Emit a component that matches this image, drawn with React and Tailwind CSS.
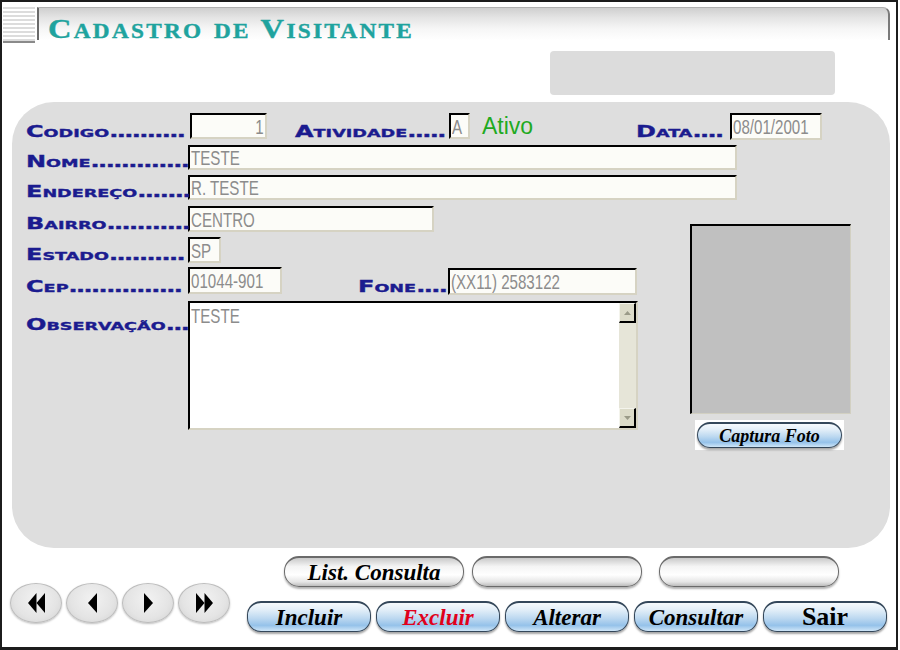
import React from "react";

const LBL =
  "font-['DejaVu_Sans',sans-serif] font-bold text-[15px] leading-none text-[#1b1b8f] [font-variant-caps:small-caps] [-webkit-text-stroke:0.35px_#1b1b8f] whitespace-nowrap inline-block origin-left scale-x-[1.6]";

function Label({ word, dots, w, className = "" }) {
  return (
    <div className={`shrink-0 flex items-end leading-none ${className}`} style={{ width: w }}>
      <span className={LBL}>
        <span>{word}</span>
        <span className="tracking-[-1px]">{dots}</span>
      </span>
    </div>
  );
}

function Field({ value, w, h = 25, right = false, className = "" }) {
  return (
    <div
      className={`shrink-0 bg-[#fcfcf8] border-2 border-t-black border-l-black border-b-[#d6d3c3] border-r-[#d6d3c3] ${className}`}
      style={{ width: w, height: h }}
    >
      <div className={`flex h-full items-center px-[1px] ${right ? "justify-end" : ""}`}>
        <span
          className={`inline-block whitespace-nowrap font-['Liberation_Sans',sans-serif] text-[21px] leading-none text-[#8c8c8c] scale-x-[0.72] ${right ? "origin-right" : "origin-left"}`}
        >
          {value}
        </span>
      </div>
    </div>
  );
}

const BLUE_BG =
  "bg-[linear-gradient(to_bottom,#f6fafd_0%,#e2eef8_25%,#bcd8f0_55%,#95c2ea_80%,#cfe6f8_100%)]";

function BluePill({ children }) {
  return (
    <div
      className={`h-[31px] w-[124px] rounded-[14px] border border-[#34475a] border-t-2 shadow-[0_2px_2px_rgba(0,0,0,0.35)] ${BLUE_BG} flex items-center justify-center`}
    >
      {children}
    </div>
  );
}

function GrayPill({ children, w }) {
  return (
    <div
      className="h-[31px] shrink-0 rounded-[15px] border border-[#6a6a6a] border-t-2 shadow-[0_2px_2px_rgba(0,0,0,0.3)] bg-[linear-gradient(to_bottom,#c9c9c9_0%,#f4f4f4_30%,#ffffff_60%,#e6e6e6_85%,#bdbdbd_100%)] flex items-center justify-center"
      style={{ width: w }}
    >
      {children}
    </div>
  );
}

function NavBtn({ children }) {
  return (
    <div className="w-[52px] h-[40px] rounded-[50%] border border-[#bdbdbd] shadow-[0_1px_2px_rgba(0,0,0,0.25)] bg-[radial-gradient(ellipse_at_50%_40%,#f2f2f2_0%,#e4e4e4_60%,#cfcfcf_100%)] flex items-center justify-center">
      {children}
    </div>
  );
}

const BTN_TXT =
  "font-['Liberation_Serif',serif] font-bold italic text-[23px] leading-none";

export default function App() {
  return (
    <div className="w-[900px] h-[650px] bg-white">
      <div className="w-[898px] h-[650px] bg-white border-t-2 border-l-2 border-r-2 border-b-[3px] border-[#1c1c1c] flex flex-col">
        {/* Title row */}
        <div className="flex mt-[5px] h-[36px]">
          <div className="ml-[1px] w-[32px] h-[36px] border-b-2 border-[#8a8a8a] bg-[repeating-linear-gradient(to_bottom,#dcdcdc_0px,#dcdcdc_2px,#ffffff_2px,#ffffff_4px)]" />
          <div className="ml-[2px] mr-[6px] flex-1 h-[33px] border-l-2 border-l-[#6a6a6a] border-t border-t-[#b0b0b0] border-r-2 border-r-[#7a7a7a] rounded-tr-[7px] bg-[linear-gradient(to_bottom,#cfcfcf_0%,#e4e4e4_30%,#f6f6f6_65%,#ffffff_100%)] flex items-end pl-[9px]">
            <span className="inline-block origin-left scale-x-[1.16] font-['Liberation_Serif',serif] font-bold text-[28px] leading-[23px] tracking-[2px] text-[#1fa39e] [font-variant-caps:small-caps] [-webkit-text-stroke:0.4px_#1fa39e]">
              Cadastro de Visitante
            </span>
          </div>
        </div>

        {/* top-right gray box */}
        <div className="mt-[8px] ml-[548px] w-[285px] h-[44px] bg-[#dcdcdc] rounded-[4px]" />

        {/* main panel */}
        <div className="mt-[7px] ml-[10px] w-[878px] h-[446px] bg-[#dedede] rounded-[42px] pl-[14px] pt-[11px] flex flex-col">
          {/* Row 1 */}
          <div className="flex items-end h-[27px]">
            <Label word="Codigo" dots=".........." w={162} />
            <Field value="1" w={77} h={26} right className="ml-[2px] mb-[1px]" />
            <Label word="Atividade" dots="....." w={152} className="ml-[28px]" />
            <Field value="A" w={21} h={26} className="ml-[2px] mb-[1px]" />
            <span className="ml-[12px] mb-[1px] font-['Liberation_Sans',sans-serif] text-[23px] leading-none text-[#1faa1f] self-center">
              Ativo
            </span>
            <Label word="Data" dots="...." w={93} className="ml-[103px]" />
            <Field value="08/01/2001" w={92} h={27} className="ml-[1px]" />
          </div>
          {/* Row 2 */}
          <div className="flex items-end h-[25px] mt-[5px]">
            <Label word="Nome" dots="............." w={162} />
            <Field value="TESTE" w={549} />
          </div>
          {/* Row 3 */}
          <div className="flex items-end h-[25px] mt-[5px]">
            <Label word="Endereço" dots="......." w={162} />
            <Field value="R. TESTE" w={549} />
          </div>

          {/* lower section */}
          <div className="flex mt-[6px]">
            <div className="flex flex-col w-[612px]">
              <div className="flex items-end h-[26px]">
                <Label word="Bairro" dots="..........." w={162} />
                <Field value="CENTRO" w={246} h={26} />
              </div>
              <div className="flex items-end h-[26px] mt-[5px]">
                <Label word="Estado" dots=".........." w={162} />
                <Field value="SP" w={33} h={26} />
              </div>
              <div className="flex items-end h-[28px] mt-[4px]">
                <Label word="Cep" dots="..............." w={162} />
                <Field value="01044-901" w={94} h={27} className="mb-[1px]" />
                <Label word="Fone" dots="...." w={90} className="ml-[76px]" />
                <Field value="(XX11) 2583122" w={189} h={27} />
              </div>
              <div className="flex items-start mt-[6px]">
                <Label word="Observação" dots="..." w={162} className="mt-[17px]" />
                {/* textarea */}
                <div className="w-[450px] h-[129px] bg-white border-2 border-t-black border-l-black border-b-[#d6d3c3] border-r-[#d6d3c3] flex">
                  <div className="flex-1 pt-[2px] pl-[1px] flex items-start">
                    <span className="inline-block origin-left scale-x-[0.72] font-['Liberation_Sans',sans-serif] text-[21px] leading-none text-[#8c8c8c]">
                      TESTE
                    </span>
                  </div>
                  <div className="w-[17px] h-full bg-[#e6e5d8] flex flex-col justify-between">
                    <div className="h-[20px] bg-[#dcdbc9] border-t border-l border-[#f4f4ec] border-r-2 border-b-2 border-r-black border-b-black flex items-center justify-center">
                      <svg width="7" height="4" viewBox="0 0 7 4">
                        <polygon points="3.5,0 7,4 0,4" fill="#9a9a88" />
                      </svg>
                    </div>
                    <div className="h-[20px] bg-[#dcdbc9] border-t border-l border-[#f4f4ec] border-r-2 border-b-2 border-r-black border-b-black flex items-center justify-center">
                      <svg width="7" height="4" viewBox="0 0 7 4">
                        <polygon points="0,0 7,0 3.5,4" fill="#9a9a88" />
                      </svg>
                    </div>
                  </div>
                </div>
              </div>
            </div>

            {/* photo column */}
            <div className="ml-[52px] mt-[18px] flex flex-col">
              <div className="w-[161px] h-[190px] bg-[#c0c0c0] border-t-2 border-l-2 border-t-black border-l-black border-b border-r border-b-[#d2d0c2] border-r-[#d2d0c2]" />
              <div className="mt-[6px] ml-[5px] w-[149px] h-[30px] bg-white flex items-center justify-center">
                <div className={`w-[145px] h-[26px] rounded-[13px] border border-[#34475a] border-t-2 shadow-[0_2px_2px_rgba(0,0,0,0.35)] ${BLUE_BG} flex items-center justify-center`}>
                  <span className="font-['Liberation_Serif',serif] font-bold italic text-[18px] leading-none text-black">
                    Captura Foto
                  </span>
                </div>
              </div>
            </div>
          </div>
        </div>

        {/* bottom buttons */}
        <div className="flex mt-[8px]">
          <div className="ml-[8px] mt-[27px] flex gap-[4px]">
            <NavBtn>
              <svg width="17" height="20" viewBox="0 0 17 20">
                <polygon points="8.5,0 0,10 8.5,20" fill="#000" />
                <polygon points="17,0 8.5,10 17,20" fill="#000" />
              </svg>
            </NavBtn>
            <NavBtn>
              <svg width="9" height="20" viewBox="0 0 9 20">
                <polygon points="9,0 0,10 9,20" fill="#000" />
              </svg>
            </NavBtn>
            <NavBtn>
              <svg width="9" height="20" viewBox="0 0 9 20">
                <polygon points="0,0 9,10 0,20" fill="#000" />
              </svg>
            </NavBtn>
            <NavBtn>
              <svg width="17" height="20" viewBox="0 0 17 20">
                <polygon points="0,0 8.5,10 0,20" fill="#000" />
                <polygon points="8.5,0 17,10 8.5,20" fill="#000" />
              </svg>
            </NavBtn>
          </div>
          <div className="ml-[17px] flex flex-col">
            <div className="flex ml-[37px]">
              <GrayPill w={180}>
                <span className={`${BTN_TXT} text-black`}>List. Consulta</span>
              </GrayPill>
              <div className="ml-[8px]">
                <GrayPill w={170} />
              </div>
              <div className="ml-[17px]">
                <GrayPill w={180} />
              </div>
            </div>
            <div className="flex gap-[5px] mt-[14px]">
              <BluePill>
                <span className={`${BTN_TXT} text-black`}>Incluir</span>
              </BluePill>
              <BluePill>
                <span className={`${BTN_TXT} text-[#e0001b]`}>Excluir</span>
              </BluePill>
              <BluePill>
                <span className={`${BTN_TXT} text-black`}>Alterar</span>
              </BluePill>
              <BluePill>
                <span className={`${BTN_TXT} text-black`}>Consultar</span>
              </BluePill>
              <BluePill>
                <span className="font-['Liberation_Serif',serif] font-bold text-[26px] leading-none text-black">
                  Sair
                </span>
              </BluePill>
            </div>
          </div>
        </div>
      </div>
    </div>
  );
}
